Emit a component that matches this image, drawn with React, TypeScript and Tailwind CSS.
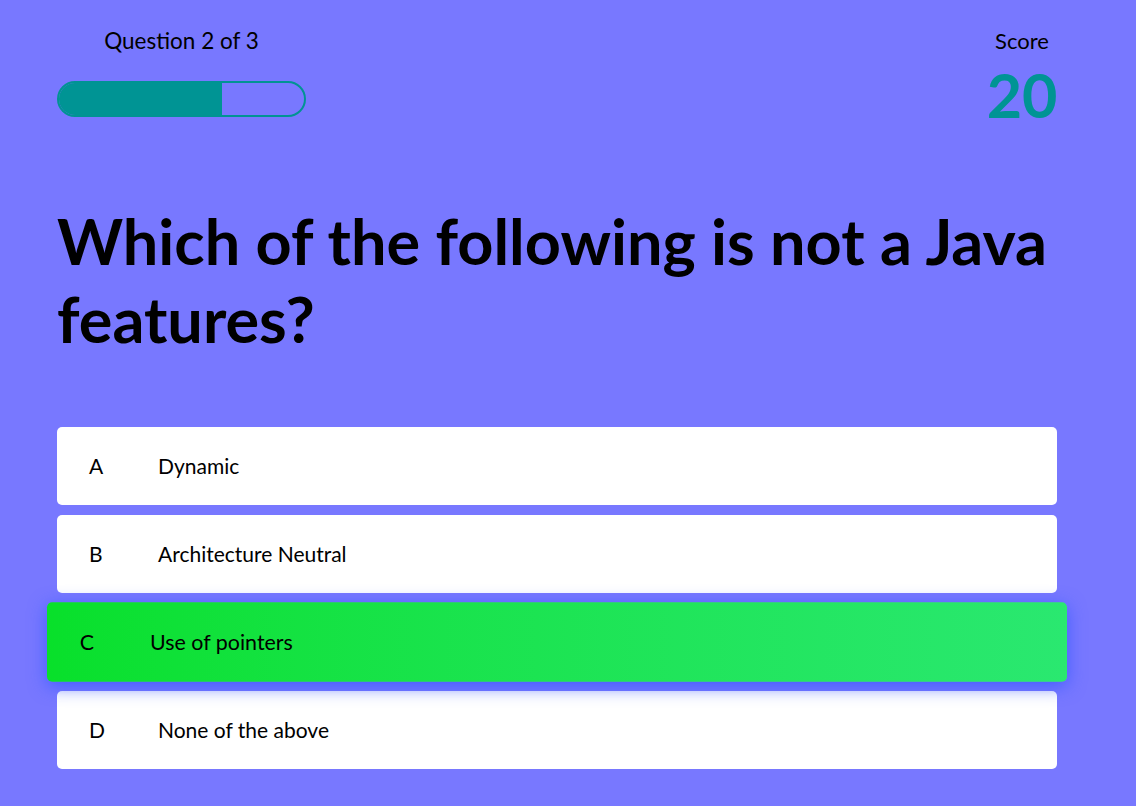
import React from "react";

const opcoes = [
  { letra: "A", texto: "Dynamic" },
  { letra: "B", texto: "Architecture Neutral" },
  { letra: "C", texto: "Use of pointers" },
  { letra: "D", texto: "None of the above" },
];

const App: React.FC = () => {
  const selecionada = "C";

  return (
    <div
      className="min-h-[806px] w-full bg-[#7878ff] text-black"
      style={{ fontFamily: "Lato, 'Open Sans', sans-serif" }}
    >
      <div className="w-[1114px] px-[57px] pt-[28px]">
        {/* Cabeçalho: progresso e pontuação */}
        <div className="flex items-start justify-between">
          <div className="flex w-[249px] flex-col items-center">
            <p className="text-[22.5px] leading-[26px]">Question 2 of 3</p>
            <div className="mt-[27px] h-[36px] w-full overflow-hidden rounded-full border-2 border-[#009393]">
              <div className="h-full w-2/3 bg-[#009494]" />
            </div>
          </div>
          <div className="flex w-[70px] flex-col items-center">
            <p className="text-[22px] leading-[26px]">Score</p>
            <p className="mt-[10px] text-[61px] font-bold leading-[62px] text-[#009494]">20</p>
          </div>
        </div>

        {/* Pergunta */}
        <h1 className="mt-[76px] text-[63px] font-bold leading-[78px]">
          Which of the following is not a Java features?
        </h1>

        {/* Alternativas */}
        <div className="mt-[69px] flex flex-col gap-[10px]">
          {opcoes.map((op) => (
            <div
              key={op.letra}
              className={`flex h-[78px] items-center rounded-[5px] px-8 text-[21px] ${
                op.letra === selecionada
                  ? "scale-[1.02] bg-gradient-to-r from-[#08e02a] to-[#2ae870] shadow-[0_4px_18px_rgba(60,90,255,0.9)]"
                  : "bg-white"
              }`}
            >
              <span className="w-[69px]">{op.letra}</span>
              <span>{op.texto}</span>
            </div>
          ))}
        </div>
      </div>
    </div>
  );
};

export default App;
